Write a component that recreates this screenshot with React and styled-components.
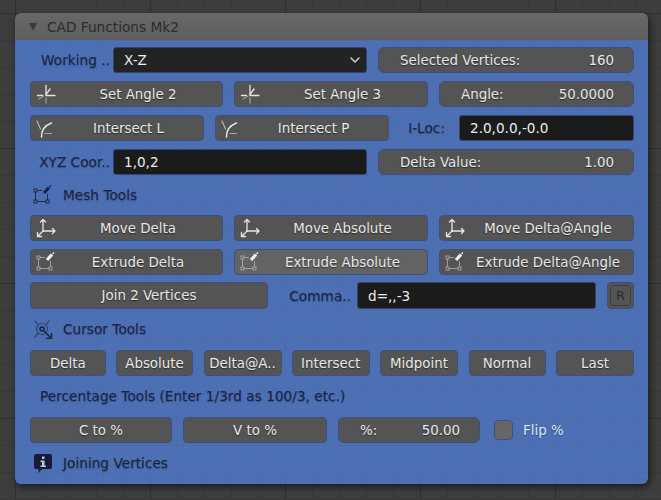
import React from 'react';
import styled, { createGlobalStyle } from 'styled-components';

const GlobalStyle = createGlobalStyle`
  html, body { margin: 0; padding: 0; }
  body {
    width: 661px;
    height: 500px;
    overflow: hidden;
    font-family: "DejaVu Sans", sans-serif;
    background-color: #3d3d3d;
    background-image:
      linear-gradient(to right, #303030 1px, transparent 1px),
      linear-gradient(to bottom, #303030 1px, transparent 1px),
      linear-gradient(to right, #383838 1px, transparent 1px),
      linear-gradient(to bottom, #383838 1px, transparent 1px);
    background-size: 135px 135px, 135px 135px, 27px 27px, 27px 27px;
    background-position: 15px 13px, 15px 13px, 15px 13px, 15px 13px;
  }
`;

const Canvas = styled.div`
  padding: 13px 13px 16px 15px;
`;

const Panel = styled.div`
  width: 633px;
  height: 471px;
  border-radius: 6px;
  overflow: hidden;
  display: flex;
  flex-direction: column;
  box-shadow: 2px 3px 7px rgba(0, 0, 0, 0.55);
`;

const Header = styled.div`
  height: 27px;
  flex: none;
  display: flex;
  align-items: center;
  gap: 10px;
  padding: 0 0 0 14px;
  background: linear-gradient(to bottom, #686868, #5e5e5e);
  color: #2c2c2c;
  font-size: 13.7px;
`;

const Caret = styled.span`
  width: 0;
  height: 0;
  border-left: 4px solid transparent;
  border-right: 4px solid transparent;
  border-top: 8px solid #3a3a3a;
`;

const Body = styled.div`
  flex: 1;
  background-color: #4d6fb3;
  background-image:
    linear-gradient(to right, rgba(0, 0, 0, 0.025) 1px, transparent 1px),
    linear-gradient(to bottom, rgba(0, 0, 0, 0.025) 1px, transparent 1px);
  background-size: 27px 27px;
  padding: 7px 14px 0 15px;
  display: flex;
  flex-direction: column;
`;

const Row = styled.div`
  display: flex;
  align-items: stretch;
  gap: ${(p) => p.$gap || 11}px;
  height: ${(p) => p.$h || 26}px;
  margin-bottom: ${(p) => (p.$mb === undefined ? 8 : p.$mb)}px;
`;

const LabelRow = styled.div`
  display: flex;
  align-items: center;
  height: ${(p) => p.$h || 24}px;
  margin-bottom: ${(p) => p.$mb || 8}px;
  padding-left: ${(p) => p.$pl || 3}px;
  gap: 10px;
  font-size: 13.7px;
  color: #1b2440;
  text-shadow: 0 1px 1px rgba(30, 45, 90, 0.45);
`;

const PlainLabel = styled.div`
  display: flex;
  align-items: center;
  justify-content: flex-end;
  box-sizing: border-box;
  width: ${(p) => p.$w}px;
  flex: none;
  margin-right: -11px;
  padding-right: ${(p) => p.$pr || 3}px;
  font-size: 13.7px;
  white-space: nowrap;
  color: #1b2440;
  text-shadow: 0 1px 1px rgba(30, 45, 90, 0.45);
`;

const Btn = styled.button`
  width: ${(p) => p.$w}px;
  flex: none;
  height: 100%;
  margin: 0;
  padding: 0 ${(p) => (p.$icon ? 2 : 2)}px 0 ${(p) => (p.$icon ? 5 : 2)}px;
  display: flex;
  align-items: center;
  border: 1px solid #3c5080;
  border-radius: 4px;
  background: ${(p) => (p.$hover ? '#636363' : '#545454')};
  color: #e8e8e8;
  font-family: inherit;
  font-size: 13.4px;
  text-shadow: 0 1px 1px rgba(0, 0, 0, 0.5);
  white-space: nowrap;
`;

const BtnText = styled.span`
  flex: 1;
  text-align: center;
`;

const Field = styled.div`
  width: ${(p) => p.$w}px;
  flex: none;
  box-sizing: border-box;
  display: flex;
  align-items: center;
  justify-content: space-between;
  padding: 0 19px 0 21px;
  border: 1px solid #3c5080;
  border-radius: 6px;
  background: #545454;
  color: #e8e8e8;
  font-size: 13.4px;
  text-shadow: 0 1px 1px rgba(0, 0, 0, 0.5);
`;

const TextInput = styled.div`
  width: ${(p) => p.$w}px;
  flex: none;
  box-sizing: border-box;
  display: flex;
  align-items: center;
  justify-content: space-between;
  padding: 0 5px 0 10px;
  border: 1px solid #33456f;
  border-radius: 3px;
  background: ${(p) => (p.$select ? '#232323' : '#1b1b1b')};
  color: #ececec;
  font-size: 13.6px;
`;

const ToggleR = styled.div`
  width: 27px;
  flex: none;
  box-sizing: border-box;
  padding: 2px;
  border: 1px solid #3c5080;
  border-radius: 4px;
  background: #545454;
`;

const ToggleInner = styled.div`
  height: 100%;
  box-sizing: border-box;
  display: flex;
  align-items: center;
  justify-content: center;
  border: 1px solid #3f3f3f;
  border-radius: 4px;
  color: #2c2c2c;
  font-size: 13px;
`;

const CheckWrap = styled.div`
  display: flex;
  align-items: center;
  gap: 10px;
  margin-left: 3px;
  font-size: 13.4px;
  color: #dfe6f5;
  text-shadow: 0 1px 1px rgba(30, 45, 90, 0.5);
`;

const CheckBox = styled.span`
  width: 19px;
  height: 20px;
  box-sizing: border-box;
  border: 1px solid #3c5080;
  border-radius: 4px;
  background: #666666;
`;

const IconBox = styled.svg`
  width: ${(p) => p.$s || 20}px;
  height: ${(p) => p.$s || 20}px;
  flex: none;
`;

const CrossIcon = () => (
  <IconBox viewBox="0 0 20 20" fill="none" stroke="#e4e4e4" strokeWidth="1.3" strokeLinecap="round">
    <path d="M1.500 11.500h5M10 11.500h9" />
    <path d="M10 1.500v8.500" />
    <path d="M10 14v5" stroke="#9a9a9a" />
    <path d="M10 10.500l4-5.500" />
    <path d="M8 12l-5 3" stroke="#9a9a9a" />
  </IconBox>
);

const CurveIcon = () => (
  <IconBox viewBox="0 0 20 20" fill="none" stroke="#e4e4e4" strokeLinecap="round">
    <path d="M5.500 19c-.2-5 2-11 10-14" strokeWidth="1.600" />
    <path d="M1 3l3.500 8" strokeWidth="1.100" stroke="#bbb" />
    <path d="M9 15.500h6.500" strokeWidth="1" stroke="#aaa" />
  </IconBox>
);

const AxesIcon = () => (
  <IconBox viewBox="0 0 20 20" fill="none" stroke="#e6e6e6" strokeWidth="1.300" strokeLinecap="round" strokeLinejoin="round">
    <path d="M7 13V1.500M4.500 4L7 1.500 9.500 4" />
    <path d="M7 13h12M16.500 10.500L19 13l-2.500 2.500" />
    <path d="M7 13l-5.500 5.500M1.500 14.500v4h4" />
  </IconBox>
);

const ExtrudeIcon = ({ color = '#a8a8a8', pen = '#f0f0f0' }) => (
  <IconBox viewBox="0 0 20 20" fill="none" stroke={color} strokeWidth="0.900">
    <rect x="1" y="4" width="3" height="3" />
    <rect x="1" y="15" width="3" height="3" />
    <rect x="13" y="15" width="3" height="3" />
    <path d="M4 5.500h5M2.500 7v8M4 16.500h9M14.500 15V9" />
    <path d="M11 8l5-5.500" stroke={pen} strokeWidth="3.200" />
    <path d="M16.500 2l1.500-1.500" stroke={pen} strokeWidth="1.200" />
  </IconBox>
);

const CursorIcon = () => (
  <IconBox viewBox="0 0 20 20" fill="none" stroke="#1b2440" strokeWidth="1.200" strokeLinecap="round" $s={20}>
    <circle cx="9" cy="10" r="5.500" stroke="#33466f" />
    <circle cx="9" cy="10" r="2" strokeWidth="1.500" />
    <path d="M2 2l3.500 4M16 2l-3.500 4M2 18l3.500-4" stroke="#33466f" />
    <path d="M11 12l7 7M18.500 14.500v5h-5" strokeWidth="1.500" />
  </IconBox>
);

const SpeechInfoIcon = () => (
  <IconBox viewBox="0 0 20 20" $s={20}>
    <path d="M3 1h14a2 2 0 0 1 2 2v11a2 2 0 0 1-2 2H9l-3.500 4V16H3a2 2 0 0 1-2-2V3a2 2 0 0 1 2-2z" fill="#161d33" />
    <path d="M9 3.500h2.500v2.500H9zM7.500 7.500h4V12.500h1.500V14H7.500v-1.500H9V9H7.500z" fill="#b9c6e6" />
  </IconBox>
);

const SelectChevron = () => (
  <IconBox viewBox="0 0 12 12" fill="none" stroke="#d0d0d0" strokeWidth="1.500" strokeLinecap="round" strokeLinejoin="round" $s={12}>
    <path d="M2 4l4 4 4-4" />
  </IconBox>
);

const IconBtn = ({ w, icon, label, hover }) => (
  <Btn $w={w} $icon $hover={hover}>
    {icon}
    <BtnText>{label}</BtnText>
  </Btn>
);

const cursorButtons = [
  ['Delta', 75.5],
  ['Absolute', 77],
  ['Delta@A..', 78],
  ['Intersect', 77.5],
  ['Midpoint', 78],
  ['Normal', 77],
  ['Last', 78],
];

function App() {
  return (
    <Canvas>
      <GlobalStyle />
      <Panel>
        <Header>
          <Caret />
          CAD Functions Mk2
        </Header>
        <Body>
          <Row>
            <PlainLabel $w={83}>Working ..</PlainLabel>
            <TextInput $w={254} $select>
              X-Z
              <SelectChevron />
            </TextInput>
            <Field $w={256}>
              <span>Selected Vertices:</span>
              <span>160</span>
            </Field>
          </Row>
          <Row>
            <IconBtn w={193} icon={<CrossIcon />} label="Set Angle 2" />
            <IconBtn w={194} icon={<CrossIcon />} label="Set Angle 3" />
            <Field $w={195}>
              <span>Angle:</span>
              <span>50.0000</span>
            </Field>
          </Row>
          <Row>
            <IconBtn w={174} icon={<CurveIcon />} label="Intersect L" />
            <IconBtn w={174} icon={<CurveIcon />} label="Intersect P" />
            <PlainLabel $w={59} $pr={14}>I-Loc:</PlainLabel>
            <TextInput $w={175}>2.0,0.0,-0.0</TextInput>
          </Row>
          <Row>
            <PlainLabel $w={83}>XYZ Coor..</PlainLabel>
            <TextInput $w={254}>1,0,2</TextInput>
            <Field $w={256}>
              <span>Delta Value:</span>
              <span>1.00</span>
            </Field>
          </Row>
          <LabelRow>
            <ExtrudeIcon color="#1b2440" pen="#1b2440" />
            Mesh Tools
          </LabelRow>
          <Row>
            <IconBtn w={193} icon={<AxesIcon />} label="Move Delta" />
            <IconBtn w={194} icon={<AxesIcon />} label="Move Absolute" />
            <IconBtn w={195} icon={<AxesIcon />} label="Move Delta@Angle" />
          </Row>
          <Row $mb={7}>
            <IconBtn w={193} icon={<ExtrudeIcon />} label="Extrude Delta" />
            <IconBtn w={194} icon={<ExtrudeIcon />} label="Extrude Absolute" hover />
            <IconBtn w={195} icon={<ExtrudeIcon />} label="Extrude Delta@Angle" />
          </Row>
          <Row $h={27}>
            <Btn $w={238}>
              <BtnText>Join 2 Vertices</BtnText>
            </Btn>
            <PlainLabel $w={78} $pr={6}>Comma..</PlainLabel>
            <TextInput $w={239}>d=,,-3</TextInput>
            <ToggleR>
              <ToggleInner>R</ToggleInner>
            </ToggleR>
          </Row>
          <LabelRow $mb={10} $h={23}>
            <CursorIcon />
            Cursor Tools
          </LabelRow>
          <Row $gap={10.5}>
            {cursorButtons.map(([label, w]) => (
              <Btn key={label} $w={w}>
                <BtnText>{label}</BtnText>
              </Btn>
            ))}
          </Row>
          <LabelRow $mb={9} $pl={10}>Percentage Tools (Enter 1/3rd as 100/3, etc.)</LabelRow>
          <Row>
            <Btn $w={142}>
              <BtnText>C to %</BtnText>
            </Btn>
            <Btn $w={144}>
              <BtnText>V to %</BtnText>
            </Btn>
            <Field $w={142}>
              <span>%:</span>
              <span>50.00</span>
            </Field>
            <CheckWrap>
              <CheckBox />
              Flip %
            </CheckWrap>
          </Row>
          <LabelRow>
            <SpeechInfoIcon />
            Joining Vertices
          </LabelRow>
        </Body>
      </Panel>
    </Canvas>
  );
}

export default App;
